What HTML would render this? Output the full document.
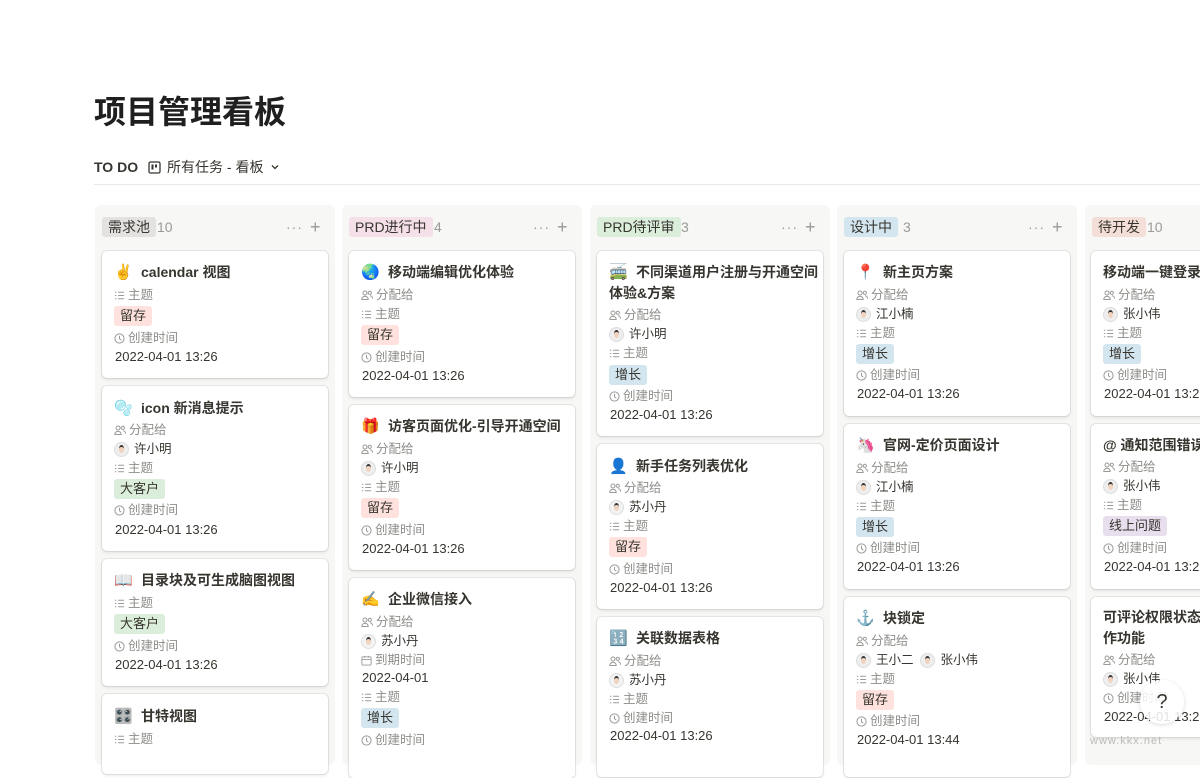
<!DOCTYPE html>
<html><head><meta charset="utf-8"><style>
body{margin:0;width:1200px;height:750px;overflow:hidden;background:#fff;font-family:"Liberation Sans","Noto Sans CJK SC",sans-serif;color:#37352f;position:relative}
.a{position:absolute}
.col{position:absolute;top:205px;height:560px;width:240px;background:#f7f7f5;border-radius:6px}
.card{position:absolute;width:226px;background:#fff;border-radius:5px;box-shadow:0 0 0 1px rgba(15,15,15,.08),0 2px 3px rgba(15,15,15,.08)}
.l{position:absolute;height:20px;line-height:20px;white-space:nowrap;font-size:12.5px;color:#8d8d8a}
.l svg{vertical-align:-2px;margin-right:3px}
.t{font-size:14px;font-weight:600;color:#37352f}
.v{font-size:12.5px;color:#37352f}
.d{font-size:13px;color:#37352f}
.tag{display:inline-block;height:20px;line-height:20px;padding:0 6px;border-radius:3px;font-size:13px;color:#37352f}
.r{background:#ffe2dd}.g{background:#dbeddb}.b{background:#d3e5ef}.p{background:#e8deee}
.av{display:inline-block;width:15px;height:15px;border-radius:50%;background:#eee;border:1px solid #ddd;vertical-align:-4px;margin-right:5px;box-sizing:border-box;position:relative;overflow:hidden}
.av::after{content:"";position:absolute;left:4px;top:2px;width:5px;height:6px;border-radius:50%;background:#f2d3be;border-top:2px solid #333}
.hd{position:absolute;top:217px;height:20px;line-height:20px;font-size:14px;padding:0 6px;border-radius:3px;color:#37352f}
.cnt{position:absolute;top:217px;line-height:20px;font-size:14px;color:#9b9a97}
.em{display:inline-block;width:22px;font-size:15px;margin-right:5px}
</style></head><body>
<div class="a" style="left:94px;top:87px;font-size:32px;font-weight:700;color:#1f1f1f">项目管理看板</div>
<div class="a" style="left:94px;top:157px;font-size:14px;font-weight:600;line-height:20px">TO DO</div>
<div class="a" style="left:148px;top:157px;font-size:14px;line-height:20px;color:#37352f"><svg width="13" height="13" viewBox="0 0 13 13" style="vertical-align:-2px;margin-right:6px"><rect x="1" y="1" width="11" height="11" rx="1.5" fill="none" stroke="#37352f" stroke-width="1.3"/><rect x="3.5" y="3.5" width="2" height="5" fill="#37352f"/><rect x="7" y="3.5" width="2" height="3" fill="#37352f"/></svg>所有任务 - 看板 <svg width="10" height="10" viewBox="0 0 10 10" style="margin-left:3px"><path d="M2 3.5l3 3 3-3" fill="none" stroke="#37352f" stroke-width="1.3"/></svg></div>
<div class="a" style="left:94px;top:184px;width:1106px;height:1px;background:#e9e9e7"></div>

<div class="col" style="left:95px"></div>
<div class="col" style="left:342px"></div>
<div class="col" style="left:590px"></div>
<div class="col" style="left:837px"></div>
<div class="col" style="left:1085px"></div>

<div class="hd" style="left:102px;background:#e3e2e0">需求池</div><div class="cnt" style="left:157px">10</div>
<div class="hd" style="left:349px;background:#f5e0e9">PRD进行中</div><div class="cnt" style="left:434px">4</div>
<div class="hd" style="left:597px;background:#dbeddb">PRD待评审</div><div class="cnt" style="left:681px">3</div>
<div class="hd" style="left:844px;background:#d3e5ef">设计中</div><div class="cnt" style="left:903px">3</div>
<div class="hd" style="left:1092px;background:#f4dfd8">待开发</div><div class="cnt" style="left:1147px">10</div>
<div class="cnt" style="left:286px;letter-spacing:1px">···</div><div class="cnt" style="left:310px;font-size:18px">+</div>
<div class="cnt" style="left:533px;letter-spacing:1px">···</div><div class="cnt" style="left:557px;font-size:18px">+</div>
<div class="cnt" style="left:781px;letter-spacing:1px">···</div><div class="cnt" style="left:805px;font-size:18px">+</div>
<div class="cnt" style="left:1028px;letter-spacing:1px">···</div><div class="cnt" style="left:1052px;font-size:18px">+</div>

<svg width="0" height="0" style="position:absolute"><defs>
<symbol id="pp" viewBox="0 0 12 12"><circle cx="4" cy="4" r="2" fill="none" stroke="#9b9a97"/><path d="M0.8 10.5c0-2 1.5-3.3 3.2-3.3s3.2 1.3 3.2 3.3z" fill="none" stroke="#9b9a97"/><circle cx="8.8" cy="3.8" r="1.6" fill="none" stroke="#9b9a97"/><path d="M9 6.8c1.5 0 2.5 1.2 2.5 2.8" fill="none" stroke="#9b9a97"/></symbol>
<symbol id="ls" viewBox="0 0 12 12"><path d="M4.5 2.5h6.5M4.5 6h6.5M4.5 9.5h6.5M1 2.5h1.5M1 6h1.5M1 9.5h1.5" stroke="#9b9a97" stroke-width="1.1"/></symbol>
<symbol id="ck" viewBox="0 0 12 12"><circle cx="6" cy="6" r="5" fill="none" stroke="#9b9a97" stroke-width="1.1"/><path d="M6 3v3.3l2 1.5" fill="none" stroke="#9b9a97" stroke-width="1.1"/></symbol>
<symbol id="cl" viewBox="0 0 12 12"><rect x="1" y="2" width="10" height="9" rx="1" fill="none" stroke="#9b9a97"/><path d="M1 5h10M4 1v2M8 1v2" stroke="#9b9a97"/></symbol>
</defs></svg>

<!-- col1 -->
<div class="card" style="left:102px;top:251px;height:127px"></div>
<div class="l t" style="left:114px;top:262px"><span class="em">✌️</span>calendar 视图</div>
<div class="l" style="left:114px;top:285px"><svg width="11" height="11"><use href="#ls"/></svg>主题</div>
<div class="l" style="left:114px;top:306px"><span class="tag r">留存</span></div>
<div class="l" style="left:114px;top:328px"><svg width="11" height="11"><use href="#ck"/></svg>创建时间</div>
<div class="l d" style="left:115px;top:347px">2022-04-01 13:26</div>

<div class="card" style="left:102px;top:386px;height:165px"></div>
<div class="l t" style="left:114px;top:398px"><span class="em">🫧</span>icon 新消息提示</div>
<div class="l" style="left:114px;top:420px"><svg width="12" height="12"><use href="#pp"/></svg>分配给</div>
<div class="l v" style="left:114px;top:439px"><span class="av"></span>许小明</div>
<div class="l" style="left:114px;top:458px"><svg width="11" height="11"><use href="#ls"/></svg>主题</div>
<div class="l" style="left:114px;top:479px"><span class="tag g">大客户</span></div>
<div class="l" style="left:114px;top:500px"><svg width="11" height="11"><use href="#ck"/></svg>创建时间</div>
<div class="l d" style="left:115px;top:520px">2022-04-01 13:26</div>

<div class="card" style="left:102px;top:559px;height:127px"></div>
<div class="l t" style="left:114px;top:570px"><span class="em">📖</span>目录块及可生成脑图视图</div>
<div class="l" style="left:114px;top:593px"><svg width="11" height="11"><use href="#ls"/></svg>主题</div>
<div class="l" style="left:114px;top:614px"><span class="tag g">大客户</span></div>
<div class="l" style="left:114px;top:636px"><svg width="11" height="11"><use href="#ck"/></svg>创建时间</div>
<div class="l d" style="left:115px;top:655px">2022-04-01 13:26</div>

<div class="card" style="left:102px;top:694px;height:80px"></div>
<div class="l t" style="left:114px;top:706px"><span class="em">🎛️</span>甘特视图</div>
<div class="l" style="left:114px;top:729px"><svg width="11" height="11"><use href="#ls"/></svg>主题</div>

<!-- col2 -->
<div class="card" style="left:349px;top:251px;height:146px"></div>
<div class="l t" style="left:361px;top:262px"><span class="em">🌏</span>移动端编辑优化体验</div>
<div class="l" style="left:361px;top:285px"><svg width="12" height="12"><use href="#pp"/></svg>分配给</div>
<div class="l" style="left:361px;top:304px"><svg width="11" height="11"><use href="#ls"/></svg>主题</div>
<div class="l" style="left:361px;top:325px"><span class="tag r">留存</span></div>
<div class="l" style="left:361px;top:347px"><svg width="11" height="11"><use href="#ck"/></svg>创建时间</div>
<div class="l d" style="left:362px;top:366px">2022-04-01 13:26</div>

<div class="card" style="left:349px;top:405px;height:165px"></div>
<div class="l t" style="left:361px;top:416px"><span class="em">🎁</span>访客页面优化-引导开通空间</div>
<div class="l" style="left:361px;top:439px"><svg width="12" height="12"><use href="#pp"/></svg>分配给</div>
<div class="l v" style="left:361px;top:458px"><span class="av"></span>许小明</div>
<div class="l" style="left:361px;top:477px"><svg width="11" height="11"><use href="#ls"/></svg>主题</div>
<div class="l" style="left:361px;top:498px"><span class="tag r">留存</span></div>
<div class="l" style="left:361px;top:520px"><svg width="11" height="11"><use href="#ck"/></svg>创建时间</div>
<div class="l d" style="left:362px;top:539px">2022-04-01 13:26</div>

<div class="card" style="left:349px;top:578px;height:200px"></div>
<div class="l t" style="left:361px;top:589px"><span class="em">✍️</span>企业微信接入</div>
<div class="l" style="left:361px;top:612px"><svg width="12" height="12"><use href="#pp"/></svg>分配给</div>
<div class="l v" style="left:361px;top:631px"><span class="av" style="background:#f3f3f3"></span>苏小丹</div>
<div class="l" style="left:361px;top:650px"><svg width="11" height="11"><use href="#cl"/></svg>到期时间</div>
<div class="l d" style="left:362px;top:668px">2022-04-01</div>
<div class="l" style="left:361px;top:687px"><svg width="11" height="11"><use href="#ls"/></svg>主题</div>
<div class="l" style="left:361px;top:708px"><span class="tag b">增长</span></div>
<div class="l" style="left:361px;top:730px"><svg width="11" height="11"><use href="#ck"/></svg>创建时间</div>

<!-- col3 -->
<div class="card" style="left:597px;top:251px;height:185px"></div>
<div class="l t" style="left:609px;top:262px"><span class="em">🚎</span>不同渠道用户注册与开通空间</div>
<div class="l t" style="left:609px;top:283px">体验&amp;方案</div>
<div class="l" style="left:609px;top:305px"><svg width="12" height="12"><use href="#pp"/></svg>分配给</div>
<div class="l v" style="left:609px;top:324px"><span class="av"></span>许小明</div>
<div class="l" style="left:609px;top:343px"><svg width="11" height="11"><use href="#ls"/></svg>主题</div>
<div class="l" style="left:609px;top:365px"><span class="tag b">增长</span></div>
<div class="l" style="left:609px;top:386px"><svg width="11" height="11"><use href="#ck"/></svg>创建时间</div>
<div class="l d" style="left:610px;top:405px">2022-04-01 13:26</div>

<div class="card" style="left:597px;top:444px;height:165px"></div>
<div class="l t" style="left:609px;top:456px"><span class="em">👤</span>新手任务列表优化</div>
<div class="l" style="left:609px;top:478px"><svg width="12" height="12"><use href="#pp"/></svg>分配给</div>
<div class="l v" style="left:609px;top:497px"><span class="av" style="background:#f3f3f3"></span>苏小丹</div>
<div class="l" style="left:609px;top:516px"><svg width="11" height="11"><use href="#ls"/></svg>主题</div>
<div class="l" style="left:609px;top:537px"><span class="tag r">留存</span></div>
<div class="l" style="left:609px;top:559px"><svg width="11" height="11"><use href="#ck"/></svg>创建时间</div>
<div class="l d" style="left:610px;top:578px">2022-04-01 13:26</div>

<div class="card" style="left:597px;top:617px;height:160px"></div>
<div class="l t" style="left:609px;top:628px"><span class="em">🔢</span>关联数据表格</div>
<div class="l" style="left:609px;top:651px"><svg width="12" height="12"><use href="#pp"/></svg>分配给</div>
<div class="l v" style="left:609px;top:670px"><span class="av" style="background:#f3f3f3"></span>苏小丹</div>
<div class="l" style="left:609px;top:689px"><svg width="11" height="11"><use href="#ls"/></svg>主题</div>
<div class="l" style="left:609px;top:708px"><svg width="11" height="11"><use href="#ck"/></svg>创建时间</div>
<div class="l d" style="left:610px;top:726px">2022-04-01 13:26</div>

<!-- col4 -->
<div class="card" style="left:844px;top:251px;height:165px"></div>
<div class="l t" style="left:856px;top:262px"><span class="em">📍</span>新主页方案</div>
<div class="l" style="left:856px;top:285px"><svg width="12" height="12"><use href="#pp"/></svg>分配给</div>
<div class="l v" style="left:856px;top:304px"><span class="av"></span>江小楠</div>
<div class="l" style="left:856px;top:323px"><svg width="11" height="11"><use href="#ls"/></svg>主题</div>
<div class="l" style="left:856px;top:344px"><span class="tag b">增长</span></div>
<div class="l" style="left:856px;top:365px"><svg width="11" height="11"><use href="#ck"/></svg>创建时间</div>
<div class="l d" style="left:857px;top:384px">2022-04-01 13:26</div>

<div class="card" style="left:844px;top:424px;height:165px"></div>
<div class="l t" style="left:856px;top:435px"><span class="em">🦄</span>官网-定价页面设计</div>
<div class="l" style="left:856px;top:458px"><svg width="12" height="12"><use href="#pp"/></svg>分配给</div>
<div class="l v" style="left:856px;top:477px"><span class="av"></span>江小楠</div>
<div class="l" style="left:856px;top:496px"><svg width="11" height="11"><use href="#ls"/></svg>主题</div>
<div class="l" style="left:856px;top:517px"><span class="tag b">增长</span></div>
<div class="l" style="left:856px;top:538px"><svg width="11" height="11"><use href="#ck"/></svg>创建时间</div>
<div class="l d" style="left:857px;top:557px">2022-04-01 13:26</div>

<div class="card" style="left:844px;top:597px;height:180px"></div>
<div class="l t" style="left:856px;top:608px"><span class="em">⚓</span>块锁定</div>
<div class="l" style="left:856px;top:631px"><svg width="12" height="12"><use href="#pp"/></svg>分配给</div>
<div class="l v" style="left:856px;top:650px"><span class="av"></span>王小二 &nbsp;<span class="av"></span>张小伟</div>
<div class="l" style="left:856px;top:669px"><svg width="11" height="11"><use href="#ls"/></svg>主题</div>
<div class="l" style="left:856px;top:690px"><span class="tag r">留存</span></div>
<div class="l" style="left:856px;top:711px"><svg width="11" height="11"><use href="#ck"/></svg>创建时间</div>
<div class="l d" style="left:857px;top:730px">2022-04-01 13:44</div>

<!-- col5 -->
<div class="card" style="left:1091px;top:251px;height:165px"></div>
<div class="l t" style="left:1103px;top:262px">移动端一键登录</div>
<div class="l" style="left:1103px;top:285px"><svg width="12" height="12"><use href="#pp"/></svg>分配给</div>
<div class="l v" style="left:1103px;top:304px"><span class="av"></span>张小伟</div>
<div class="l" style="left:1103px;top:323px"><svg width="11" height="11"><use href="#ls"/></svg>主题</div>
<div class="l" style="left:1103px;top:344px"><span class="tag b">增长</span></div>
<div class="l" style="left:1103px;top:365px"><svg width="11" height="11"><use href="#ck"/></svg>创建时间</div>
<div class="l d" style="left:1104px;top:384px">2022-04-01 13:26</div>

<div class="card" style="left:1091px;top:424px;height:165px"></div>
<div class="l t" style="left:1103px;top:435px">@ 通知范围错误</div>
<div class="l" style="left:1103px;top:457px"><svg width="12" height="12"><use href="#pp"/></svg>分配给</div>
<div class="l v" style="left:1103px;top:476px"><span class="av"></span>张小伟</div>
<div class="l" style="left:1103px;top:495px"><svg width="11" height="11"><use href="#ls"/></svg>主题</div>
<div class="l" style="left:1103px;top:516px"><span class="tag p">线上问题</span></div>
<div class="l" style="left:1103px;top:538px"><svg width="11" height="11"><use href="#ck"/></svg>创建时间</div>
<div class="l d" style="left:1104px;top:557px">2022-04-01 13:26</div>

<div class="card" style="left:1091px;top:597px;height:140px"></div>
<div class="l t" style="left:1103px;top:607px">可评论权限状态, 操</div>
<div class="l t" style="left:1103px;top:628px">作功能</div>
<div class="l" style="left:1103px;top:650px"><svg width="12" height="12"><use href="#pp"/></svg>分配给</div>
<div class="l v" style="left:1103px;top:669px"><span class="av"></span>张小伟</div>
<div class="l" style="left:1103px;top:688px"><svg width="11" height="11"><use href="#ck"/></svg>创建时间</div>
<div class="l d" style="left:1104px;top:707px">2022-04-01 13:26</div>
<div class="a" style="left:1140px;top:680px;width:44px;height:44px;border-radius:50%;background:rgba(255,255,255,.85);box-shadow:0 1px 4px rgba(0,0,0,.15);text-align:center;line-height:44px;font-size:20px;color:#37352f">?</div>
<div class="a" style="left:1090px;top:735px;font-size:11px;color:#bbb;letter-spacing:1px">www.kkx.net</div>
</body></html>
